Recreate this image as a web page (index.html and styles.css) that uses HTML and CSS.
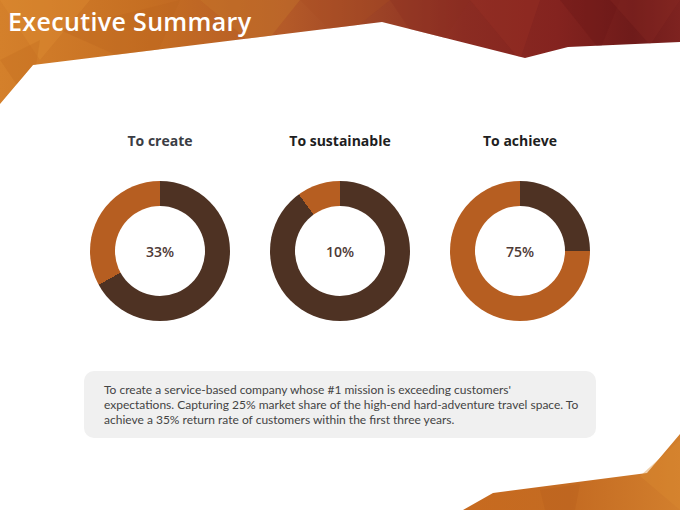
FILE: index.html
```html
<!DOCTYPE html>
<html lang="en">
<head>
<meta charset="utf-8">
<title>Executive Summary</title>
<link rel="stylesheet" href="styles.css">
</head>
<body>
<div class="slide">
  <svg class="deco deco-top" width="680" height="105" viewBox="0 0 680 105" aria-hidden="true">
    <defs>
      <linearGradient id="hg" x1="0" y1="0" x2="680" y2="0" gradientUnits="userSpaceOnUse">
        <stop offset="0" stop-color="#d4802b"/>
        <stop offset="0.22" stop-color="#c56e22"/>
        <stop offset="0.42" stop-color="#b45a28"/>
        <stop offset="0.56" stop-color="#9c4226"/>
        <stop offset="0.68" stop-color="#8b2c22"/>
        <stop offset="0.82" stop-color="#84231f"/>
        <stop offset="0.93" stop-color="#6f1b1a"/>
        <stop offset="1" stop-color="#7e2320"/>
      </linearGradient>
      <clipPath id="hc">
        <polygon points="0,0 680,0 680,42 568,47 525,58 382,22 33,65 0,104"/>
      </clipPath>
    </defs>
    <g clip-path="url(#hc)">
      <rect x="0" y="0" width="680" height="105" fill="url(#hg)"/>
      <polygon points="0,0 90,0 40,60" fill="#e08f34" opacity="0.35"/>
      <polygon points="60,30 180,0 150,70" fill="#b8641e" opacity="0.3"/>
      <polygon points="200,0 300,0 260,50" fill="#c97a2c" opacity="0.35"/>
      <polygon points="300,0 390,0 340,40" fill="#a84d22" opacity="0.35"/>
      <polygon points="390,0 470,0 430,60" fill="#8a3020" opacity="0.3"/>
      <polygon points="470,0 540,0 520,60" fill="#9a3226" opacity="0.35"/>
      <polygon points="560,0 620,0 600,50" fill="#6a1818" opacity="0.35"/>
      <polygon points="610,0 680,0 650,45" fill="#8c2a24" opacity="0.3"/>
      <polygon points="0,60 40,40 30,104" fill="#c06a1f" opacity="0.3"/>
    </g>
  </svg>
  <svg class="deco deco-bottom" width="220" height="76" viewBox="460 434 220 76" aria-hidden="true">
    <defs>
      <linearGradient id="bg" x1="460" y1="0" x2="680" y2="0" gradientUnits="userSpaceOnUse">
        <stop offset="0" stop-color="#c76a1f"/>
        <stop offset="0.5" stop-color="#c46b22"/>
        <stop offset="1" stop-color="#d27f2d"/>
      </linearGradient>
    </defs>
    <polygon points="463,510 493,493 647,473 680,434 680,510" fill="url(#bg)"/>
    <polygon points="540,490 580,484 575,510 545,510" fill="#b85e1c" opacity="0.35"/>
    <polygon points="640,476 680,440 680,510" fill="#d9892f" opacity="0.4"/>
  </svg>

  <header class="top">
    <h1 class="title">Executive Summary</h1>
  </header>

  <main class="content">
    <section class="charts">
      <div class="chart">
        <h2 class="chart-label label-muted">To create</h2>
        <div class="donut" style="--p:33%">
          <div class="donut-hole"><span class="pct">33%</span></div>
        </div>
      </div>
      <div class="chart">
        <h2 class="chart-label">To sustainable</h2>
        <div class="donut" style="--p:10%">
          <div class="donut-hole"><span class="pct">10%</span></div>
        </div>
      </div>
      <div class="chart">
        <h2 class="chart-label">To achieve</h2>
        <div class="donut" style="--p:75%">
          <div class="donut-hole"><span class="pct">75%</span></div>
        </div>
      </div>
    </section>

    <p class="summary">To create a service-based company whose #1 mission is exceeding customers' expectations. Capturing 25% market share of the high-end hard-adventure travel space. To achieve a 35% return rate of customers within the first three years.</p>
  </main>
</div>
</body>
</html>
```

FILE: styles.css
```css
* { box-sizing: border-box; }

html, body {
  margin: 0;
  padding: 0;
  background: #ffffff;
}

.slide {
  position: relative;
  width: 680px;
  height: 510px;
  overflow: hidden;
  background: #ffffff;
  font-family: "Open Sans", "Noto Sans", sans-serif;
}

.deco {
  position: absolute;
  display: block;
}

.deco-top { left: 0; top: 0; }
.deco-bottom { right: 0; bottom: 0; }

.top {
  position: relative;
  padding: 4px 0 0 8px;
}

.title {
  margin: 0;
  font-size: 25px;
  line-height: 34px;
  font-weight: 600;
  color: #ffffff;
  letter-spacing: 0.35px;
}

.content {
  position: relative;
  display: flex;
  flex-direction: column;
  align-items: center;
  padding-top: 94px;
}

.charts {
  display: grid;
  grid-template-columns: repeat(3, 180px);
  width: 540px;
}

.chart {
  display: flex;
  flex-direction: column;
  align-items: center;
  gap: 31px;
}

.chart-label {
  margin: 0;
  font-size: 14px;
  line-height: 18px;
  font-weight: 700;
  color: #1e1e1e;
}

.label-muted { color: #3b3d44; }

.donut {
  width: 140px;
  height: 140px;
  border-radius: 50%;
  background: conic-gradient(#4e3223 0 calc(100% - var(--p)), #b65e21 calc(100% - var(--p)) 100%);
  display: flex;
  align-items: center;
  justify-content: center;
}

.donut-hole {
  width: 90px;
  height: 90px;
  border-radius: 50%;
  background: #ffffff;
  display: flex;
  align-items: center;
  justify-content: center;
}

.pct {
  font-size: 14px;
  font-weight: 600;
  color: #4e3a36;
}

.summary {
  margin: 50px 0 0 0;
  width: 512px;
  padding: 11px 17px 11px 20px;
  background: #f0f0f0;
  border-radius: 10px;
  font-family: "Lato", "Open Sans", sans-serif;
  font-size: 12px;
  line-height: 15px;
  color: #444444;
}
```
